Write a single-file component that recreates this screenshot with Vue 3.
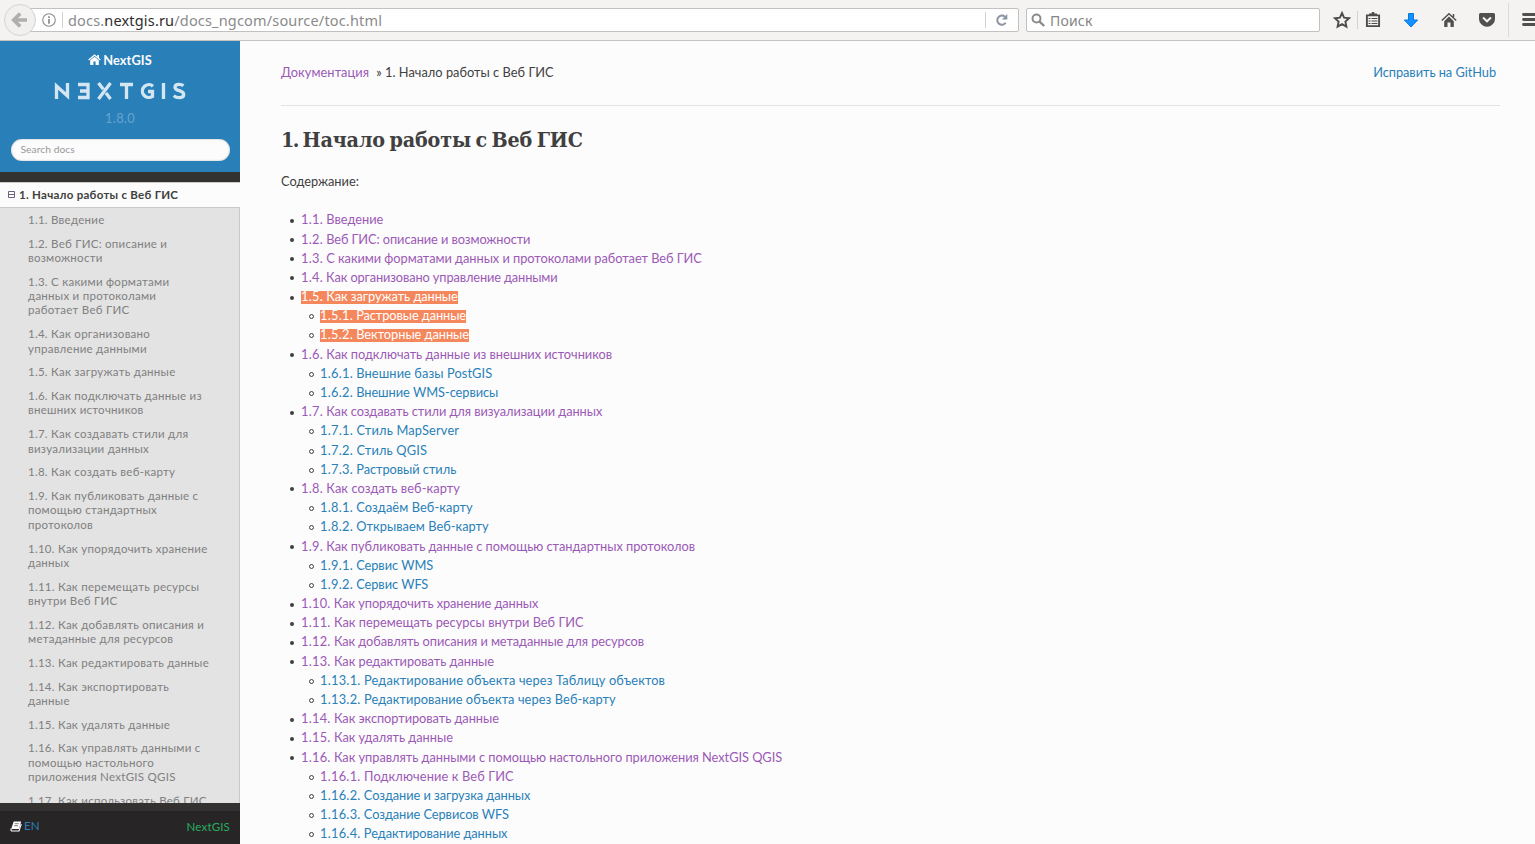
<script setup>
const menu = [
  ['1.1. Введение'],
  ['1.2. Веб ГИС: описание и', 'возможности'],
  ['1.3. С какими форматами', 'данных и протоколами', 'работает Веб ГИС'],
  ['1.4. Как организовано', 'управление данными'],
  ['1.5. Как загружать данные'],
  ['1.6. Как подключать данные из', 'внешних источников'],
  ['1.7. Как создавать стили для', 'визуализации данных'],
  ['1.8. Как создать веб-карту'],
  ['1.9. Как публиковать данные с', 'помощью стандартных', 'протоколов'],
  ['1.10. Как упорядочить хранение', 'данных'],
  ['1.11. Как перемещать ресурсы', 'внутри Веб ГИС'],
  ['1.12. Как добавлять описания и', 'метаданные для ресурсов'],
  ['1.13. Как редактировать данные'],
  ['1.14. Как экспортировать', 'данные'],
  ['1.15. Как удалять данные'],
  ['1.16. Как управлять данными с', 'помощью настольного', 'приложения NextGIS QGIS'],
  ['1.17. Как использовать Веб ГИС'],
]
// n: number, t: title, k: tracking in px, v: visited, s: selected, sub: second level
const toc = [
  { n: '1.1.', t: 'Введение', k: 0, v: true },
  { n: '1.2.', t: 'Веб ГИС: описание и возможности', k: -0.08, v: true },
  { n: '1.3.', t: 'С какими форматами данных и протоколами работает Веб ГИС', k: -0.035, v: true },
  { n: '1.4.', t: 'Как организовано управление данными', k: -0.12, v: true },
  { n: '1.5.', t: 'Как загружать данные', k: -0.05, v: true, s: true },
  { n: '1.5.1.', t: 'Растровые данные', k: -0.08, sub: true, s: true },
  { n: '1.5.2.', t: 'Векторные данные', k: -0.03, sub: true, s: true },
  { n: '1.6.', t: 'Как подключать данные из внешних источников', k: -0.03, v: true },
  { n: '1.6.1.', t: 'Внешние базы PostGIS', k: 0.1, sub: true },
  { n: '1.6.2.', t: 'Внешние WMS-сервисы', k: -0.05, sub: true },
  { n: '1.7.', t: 'Как создавать стили для визуализации данных', k: -0.055, v: true },
  { n: '1.7.1.', t: 'Стиль MapServer', k: 0.17, sub: true },
  { n: '1.7.2.', t: 'Стиль QGIS', k: 0.15, sub: true },
  { n: '1.7.3.', t: 'Растровый стиль', k: -0.04, sub: true },
  { n: '1.8.', t: 'Как создать веб-карту', k: 0.08, v: true },
  { n: '1.8.1.', t: 'Создаём Веб-карту', k: 0.1, sub: true },
  { n: '1.8.2.', t: 'Открываем Веб-карту', k: 0.04, sub: true },
  { n: '1.9.', t: 'Как публиковать данные с помощью стандартных протоколов', k: -0.03, v: true },
  { n: '1.9.1.', t: 'Сервис WMS', k: -0.05, sub: true },
  { n: '1.9.2.', t: 'Сервис WFS', k: -0.06, sub: true },
  { n: '1.10.', t: 'Как упорядочить хранение данных', k: -0.08, v: true },
  { n: '1.11.', t: 'Как перемещать ресурсы внутри Веб ГИС', k: 0.01, v: true },
  { n: '1.12.', t: 'Как добавлять описания и метаданные для ресурсов', k: -0.07, v: true },
  { n: '1.13.', t: 'Как редактировать данные', k: -0.03, v: true },
  { n: '1.13.1.', t: 'Редактирование объекта через Таблицу объектов', k: 0.13, sub: true },
  { n: '1.13.2.', t: 'Редактирование объекта через Веб-карту', k: 0.09, sub: true },
  { n: '1.14.', t: 'Как экспортировать данные', k: -0.05, v: true },
  { n: '1.15.', t: 'Как удалять данные', k: -0.02, v: true },
  { n: '1.16.', t: 'Как управлять данными с помощью настольного приложения NextGIS QGIS', k: -0.03, v: true },
  { n: '1.16.1.', t: 'Подключение к Веб ГИС', k: 0.13, sub: true, v: true },
  { n: '1.16.2.', t: 'Создание и загрузка данных', k: -0.06, sub: true },
  { n: '1.16.3.', t: 'Создание Сервисов WFS', k: -0.06, sub: true },
  { n: '1.16.4.', t: 'Редактирование данных', k: -0.06, sub: true },
]
</script>

<template>
  <div class="window">
    <div class="toolbar">
      <div class="back">
        <svg width="32" height="32" viewBox="0 0 32 32"><path d="M16.2 9.5 9.7 16l6.5 6.5M10.5 16H23" fill="none" stroke="#b0afae" stroke-width="3.6" /></svg>
      </div>
      <div class="urlbar">
        <svg class="info" width="14" height="14" viewBox="0 0 14 14"><circle cx="7" cy="7" r="6.3" fill="none" stroke="#8a8a8a" stroke-width="1.1" /><path d="M7 3.2v1.7M7 6v4.7" stroke="#8a8a8a" stroke-width="1.7" /></svg>
        <i class="sep"></i>
        <span class="url">docs.<b>nextgis.ru</b>/docs_ngcom/source/toc.html</span>
        <i class="sep right"></i>
        <svg class="reload" width="14" height="14" viewBox="0 0 14 14"><path d="M10.7 9.8A4.6 4.6 0 1 1 9.9 3.7" fill="none" stroke="#8995a2" stroke-width="2" /><path d="M12.3 1v5.4H6.9z" fill="#8995a2" /></svg>
      </div>
      <div class="searchbar">
        <svg width="15" height="15" viewBox="0 0 15 15"><circle cx="5.5" cy="5.5" r="4" fill="none" stroke="#8b8b8b" stroke-width="2" /><path d="m8.6 8.6 4.6 4.4" stroke="#8b8b8b" stroke-width="2.4" /></svg>
        <span>Поиск</span>
      </div>
      <svg class="tools" width="215" height="40" viewBox="0 0 215 40">
        <path d="m22 13 2.1 4.6 5 .6-3.7 3.4 1 5-4.4-2.5-4.4 2.5 1-5-3.7-3.4 5-.6z" fill="none" stroke="#4c4c4c" stroke-width="1.9" />
        <path d="M37.5 11v18" stroke="#d2d1d0" />
        <path d="M46.9 15.400h12.200v10.700H46.900z" fill="none" stroke="#4c4c4c" stroke-width="1.900" /><path d="M49 15v-1.500h2.500L52 12h2l.5 1.500H57V15z" fill="#4c4c4c" /><path d="M48.500 18.500h2m1 0h6m-9 2.500h2m1 0h6m-9 2.500h2m1 0h6" stroke="#4c4c4c" stroke-width="1.1" />
        <path d="M88.500 13.500h5v6.500h4.200L91 27l-6.700-7h4.200z" fill="#1590ff" stroke="#087be0" />
        <path d="m121.800 20.500 7.200-6.800 7.200 6.800M133.500 14v3" fill="none" stroke="#505050" stroke-width="1.500" /><path d="m124.200 21.200 4.800-4.600 4.800 4.600V27h-3.300v-4.500h-3V27h-3.300z" fill="#505050" />
        <path d="M160.500 13h13q1.500 0 1.500 1.500V19q0 3.200-2.300 5.300-2.500 2.500-5.700 2.500t-5.700-2.500Q159 22.200 159 19v-4.500q0-1.500 1.500-1.500z" fill="#505050" /><path d="m163 17.500 4 3.800 4-3.800" fill="none" stroke="#f4f3f1" stroke-width="2" />
        <path d="M188.500 3v34" stroke="#dddcda" />
        <path d="M203.500 14.500H217M203.500 19.500H217M203.500 24.500H217" stroke="#505050" stroke-width="2.800" stroke-linecap="round" />
      </svg>
    </div>

    <div class="page">
      <aside>
        <header>
          <div class="home"><svg width="13" height="11" viewBox="0 0 13 11"><path d="M.7 5.900 6.500 1l5.800 4.900" fill="none" stroke="#fff" stroke-width="1.300" /><path d="M9.300 1h1.700v3H9.300zM2.200 6.300l4.300-3.600 4.300 3.600V11H7.600V7.600H5.400V11H2.200z" fill="#fff" /></svg><span>NextGIS</span></div>
          <svg class="logo" width="132" height="18" viewBox="0 0 132 18">
            <g fill="none" stroke="#d4e6f2" stroke-width="3.3">
              <path d="M2.500 17V4L13.500 14V1" />
              <path d="M24 2.500h10v13H24M26 9h8" />
              <path d="m44.500 1 4.800 6.300M52 11l4.500 6M56.500 1 44.500 17" />
              <path d="M66 2.500h13M72.500 2v15" />
              <path d="M99 4.200A6.400 6.400 0 1 0 98.500 14.300V9.500H94" />
              <path d="M109.500 1v16" />
              <path d="M129.500 3.700C126.500 1.700 121 1.800 121 5.200c0 4.500 8.700 2.500 8.700 7.200 0 4-6.500 4-10 1.300" />
            </g>
          </svg>
          <div class="version">1.8.0</div>
          <div class="search">Search docs</div>
        </header>
        <nav>
          <div class="current"><svg width="7" height="7" viewBox="0 0 7 7"><path d="M.5.5h6v6h-6zM1 3.5h5" fill="none" stroke="#6d617c" /></svg><span>1. Начало работы с Веб ГИС</span></div>
          <ul>
            <li v-for="(m, i) in menu" :key="i"><div v-for="l in m" :key="l"><span>{{ l }}</span></div></li>
          </ul>
        </nav>
        <footer>
          <span class="lang"><svg width="12" height="11" viewBox="0 0 12 11"><path d="M3.700.5h7.500L9 8H1.200z" fill="#fff" /><path d="M1.200 7.500q-.8 2.300.8 2.500h7l2.300-7" fill="none" stroke="#fff" stroke-width="1.100" /><path d="M4.700 2.700h4M4.100 4.700h4" stroke="#272525" stroke-width=".6" /></svg>EN</span>
          <span class="brand">NextGIS</span>
        </footer>
      </aside>
      <main>
        <div class="crumbs">
          <span><a class="visited">Документация</a><span class="here">» 1. Начало работы с Веб ГИС</span></span>
          <a class="github">Исправить на GitHub</a>
        </div>
        <h1><span class="num">1.</span> Начало работы с Веб ГИС</h1>
        <p>Содержание:</p>
        <ul class="toc">
          <li v-for="e in toc" :key="e.n" :class="{ sub: e.sub }"><a :class="{ visited: e.v, selected: e.s }" :style="{ letterSpacing: e.k + 'px' }"><span class="n">{{ e.n }}</span> {{ e.t }}</a></li>
        </ul>
      </main>
    </div>
  </div>
</template>

<style>
body { margin: 0; overflow: hidden; }
</style>
<style scoped>
* { box-sizing: border-box; }
.window { width: 1535px; height: 844px; overflow: hidden; display: flex; flex-direction: column; background: #fcfcfc; font-family: Lato, "Noto Sans", sans-serif; color: #404040; }
.toolbar { height: 41px; flex: none; background: #f4f3f1; border-bottom: 1px solid #c6c3c0; display: flex; align-items: center; overflow: hidden; }
.back { width: 32px; height: 32px; flex: none; margin-left: 4px; border: 1px solid #d5d3d1; border-radius: 50%; background: #f1f0ee; z-index: 1; display: flex; align-items: center; justify-content: center; }
.back svg { flex: none; }
.urlbar { width: 990px; height: 24px; flex: none; margin-left: -7px; border: 1px solid #c3c1bf; border-radius: 2px; background: #fff; display: flex; align-items: center; padding-left: 12px; }
.sep { width: 1px; height: 16px; background: #cfcfcf; margin: 0 5px 0 6px; flex: none; }
.sep.right { margin: 0 9px 0 auto; }
.url { font: 14.5px/22px "Noto Sans", sans-serif; letter-spacing: .17px; color: #8b8b8b; white-space: nowrap; }
.url b { font-weight: 400; color: #2d2d2d; }
.reload { margin-right: 9px; }
.searchbar { width: 294px; height: 24px; flex: none; margin-left: 7px; border: 1px solid #c3c1bf; border-radius: 2px; background: #fff; display: flex; align-items: center; padding-left: 4px; font: 14px/22px "Noto Sans", sans-serif; letter-spacing: .2px; color: #858585; }
.searchbar span { margin-left: 4px; padding-top: 1px; }
.tools { flex: none; }
.page { flex: 1; min-height: 0; display: flex; }
aside { width: 240px; height: 803px; flex: none; background: #343131; display: flex; flex-direction: column; overflow: hidden; }
header { height: 131px; flex: none; background: #2980b9; display: flex; flex-direction: column; align-items: center; color: #fcfcfc; }
.home { margin-top: 9px; height: 19px; display: flex; align-items: center; gap: 2px; font-size: 12.8px; letter-spacing: .1px; font-weight: 700; }
.logo { margin-top: 13px; }
.version { height: 19px; line-height: 19px; margin-top: 9px; font-size: 12.8px; letter-spacing: .3px; color: rgba(255,255,255,.3); }
.search { width: 219px; height: 22px; margin-top: 11px; border-radius: 11px; background: #fcfcfc; color: #999; font-size: 10.24px; letter-spacing: .06px; line-height: 21px; padding-left: 10px; box-shadow: inset 0 0 2px #aaa; }
nav { margin-top: 10px; flex: 1; min-height: 0; overflow: hidden; background: #e3e3e3; }
.current { height: 26px; background: #fcfcfc; border-top: 1px solid #c9c9c9; border-bottom: 1px solid #c9c9c9; display: flex; align-items: center; padding: 0 0 1px 8px; gap: 4px; font-size: 11.52px; letter-spacing: .27px; font-weight: 700; white-space: nowrap; }
ul { list-style: none; margin: 0; padding: 0; }
nav ul { border-right: 1px solid #c9c9c9; padding-top: .15px; }
nav li { padding: 4.66px 0 4.66px 28px; font-size: 11.52px; line-height: 14.4px; letter-spacing: .26px; color: #808080; white-space: nowrap; }
footer { height: 33px; flex: none; margin-top: 8px; background: #272525; display: flex; justify-content: space-between; padding: 6px 10px 0 10px; font-size: 11.52px; line-height: 18px; letter-spacing: .15px; }
.lang { color: #2980b9; display: flex; align-items: center; height: 18px; gap: 2px; }
.brand { color: #27ae60; line-height: 20px; }
main { flex: 1; padding: 22px 35px 0 41px; font-size: 12.8px; line-height: 19.2px; }
.crumbs { display: flex; justify-content: space-between; height: 43px; border-bottom: 1px solid #e1e4e5; padding-right: 4px; }
a { color: #2980b9; }
.visited { color: #9b59b6; }
.crumbs .visited { letter-spacing: .07px; }
.here { margin-left: 7px; letter-spacing: .03px; }
.github { letter-spacing: -.05px; }
h1 { margin: 20px 0 0; font: 700 21.3px/28px "DejaVu Serif Condensed", "DejaVu Serif", serif; letter-spacing: -.15px; word-spacing: -2px; white-space: nowrap; }
.num { letter-spacing: -1.5px; }
p { margin: 18px 0 19px; }
.toc { padding-top: .12px; }
.toc li { position: relative; height: 19.2px; padding-left: 20px; white-space: nowrap; }
.toc li.sub { padding-left: 39px; }
.toc li::before { content: ""; box-sizing: border-box; position: absolute; left: 9px; top: 8.500px; width: 4px; height: 4px; border-radius: 50%; background: #404040; }
.toc li.sub::before { left: 28px; top: 8px; width: 5px; height: 5px; background: transparent; border: 1px solid #404040; }
.n { letter-spacing: .27px; }
.toc a.selected { background: #f5875c; color: #fff; display: inline-block; height: 13px; line-height: 11px; vertical-align: top; margin-top: 4px; }
</style>
